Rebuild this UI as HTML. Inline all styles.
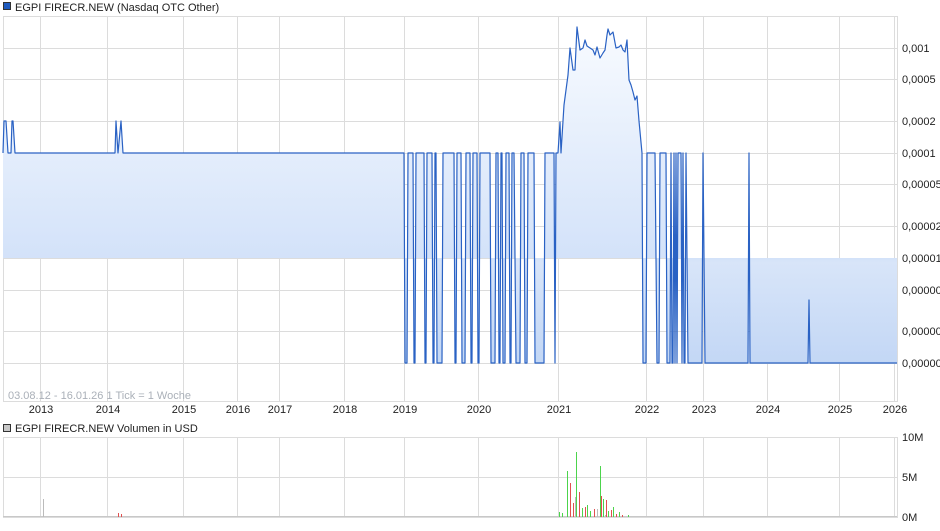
<!DOCTYPE html>
<html><head><meta charset="utf-8"><style>
html,body{margin:0;padding:0;background:#fff;}
body{width:940px;height:526px;overflow:hidden;font-family:"Liberation Sans",Arial,sans-serif;}
</style></head><body>
<svg width="940" height="526" viewBox="0 0 940 526" xmlns="http://www.w3.org/2000/svg" font-family="Liberation Sans, Arial, sans-serif">
<defs>
<linearGradient id="g" gradientUnits="userSpaceOnUse" x1="0" y1="27" x2="0" y2="363">
<stop offset="0" stop-color="#f8fbff"/>
<stop offset="0.69" stop-color="#d3e2f9"/>
<stop offset="0.7" stop-color="#d8e5f9"/>
<stop offset="1" stop-color="#c3d7f5"/>
</linearGradient>
</defs>
<!-- title -->
<rect x="3.5" y="2.5" width="7" height="7" fill="#1f5bbf" stroke="#333" stroke-width="1"/>
<text x="15" y="11" font-size="11" fill="#222">EGPI FIRECR.NEW (Nasdaq OTC Other)</text>
<!-- grid main -->
<g stroke="#dcdcdc" stroke-width="1" fill="none">
<rect x="3.5" y="16.5" width="894" height="385"/>
<path d="M3 48.5H897M3 79.5H897M3 121.5H897M3 153.5H897M3 184.5H897M3 226.5H897M3 258.5H897M3 290.5H897M3 331.5H897M3 363.5H897"/>
<path d="M40.5 16V401M107.5 16V401M183.5 16V401M237.5 16V401M279.5 16V401M344.5 16V401M404.5 16V401M478.5 16V401M558.5 16V401M646.5 16V401M703.5 16V401M767.5 16V401M839.5 16V401M894.5 16V401"/>
</g>
<!-- fill -->
<polygon fill="url(#g)" points="3,258 3,153 4,121 6,121 8,153 11,153 12,121 13,121 15,153 115,153 116,121 118,153 121,121 123,153 404,153 405,363 407,363 408,153 413,153 414,363 415,363 416,153 424,153 425,363 426,363 427,153 432,153 433,363 434,363 435,153 436,153 437,363 442,363 443,153 454,153 455,363 456,363 457,153 461,153 462,363 465,363 466,153 470,153 471,363 472,363 473,153 477,153 478,363 479,363 480,153 490,153 491,363 495,363 496,153 498,153 499,363 500,363 501,153 502,153 503,363 505,363 506,153 509,153 510,363 511,363 512,153 514,153 515,258 516,363 520,363 521,153 524,153 525,363 527,363 528,153 534,153 535,363 544,363 545,153 554,153 555,363 556,153 558,153 560,122 561,153 564,105 568,75 570,48 573,70 575,70 577,27 580,50 583,48 585,40 587,46 590,48 593,50 595,55 597,47 600,58 603,53 605,50 607,35 608,29 610,35 613,32 616,48 619,47 621,45 623,50 625,52 627,40 629,80 631,85 633,92 635,100 637,96 639,121 642,153 643,363 646,363 647,153 655,153 657,363 659,363 660,153 666,153 667,363 670,363 671,153 672,363 673,363 674,153 675,363 676,153 677,363 678,153 681,153 682,363 683,153 684,363 685,363 686,153 688,363 702,363 703,153 705,363 748,363 749,153 750,363 808,363 809,300 810,363 897,363 897,258"/>
<polyline fill="none" stroke="#2a62c4" stroke-width="1.2" stroke-linejoin="round" points="3,153 4,121 6,121 8,153 11,153 12,121 13,121 15,153 115,153 116,121 118,153 121,121 123,153 404,153 405,363 407,363 408,153 413,153 414,363 415,363 416,153 424,153 425,363 426,363 427,153 432,153 433,363 434,363 435,153 436,153 437,363 442,363 443,153 454,153 455,363 456,363 457,153 461,153 462,363 465,363 466,153 470,153 471,363 472,363 473,153 477,153 478,363 479,363 480,153 490,153 491,363 495,363 496,153 498,153 499,363 500,363 501,153 502,153 503,363 505,363 506,153 509,153 510,363 511,363 512,153 514,153 515,258 516,363 520,363 521,153 524,153 525,363 527,363 528,153 534,153 535,363 544,363 545,153 554,153 555,363 556,153 558,153 560,122 561,153 564,105 568,75 570,48 573,70 575,70 577,27 580,50 583,48 585,40 587,46 590,48 593,50 595,55 597,47 600,58 603,53 605,50 607,35 608,29 610,35 613,32 616,48 619,47 621,45 623,50 625,52 627,40 629,80 631,85 633,92 635,100 637,96 639,121 642,153 643,363 646,363 647,153 655,153 657,363 659,363 660,153 666,153 667,363 670,363 671,153 672,363 673,363 674,153 675,363 676,153 677,363 678,153 681,153 682,363 683,153 684,363 685,363 686,153 688,363 702,363 703,153 705,363 748,363 749,153 750,363 808,363 809,300 810,363 897,363"/>
<!-- y labels -->
<g font-size="11" fill="#222">
<text x="902" y="52">0,001</text>
<text x="902" y="83">0,0005</text>
<text x="902" y="125">0,0002</text>
<text x="902" y="157">0,0001</text>
<text x="902" y="188">0,00005</text>
<text x="902" y="230">0,00002</text>
<text x="902" y="262">0,00001</text>
<text x="902" y="294">0,000005</text>
<text x="902" y="335">0,000002</text>
<text x="902" y="367">0,000001</text>
</g>
<text x="8" y="399" font-size="11" fill="#aab0b8">03.08.12 - 16.01.26   1 Tick = 1 Woche</text>
<!-- x labels -->
<g font-size="11" fill="#222" text-anchor="middle">
<text x="41" y="413">2013</text><text x="108" y="413">2014</text><text x="184" y="413">2015</text><text x="238" y="413">2016</text><text x="280" y="413">2017</text><text x="345" y="413">2018</text><text x="405" y="413">2019</text><text x="479" y="413">2020</text><text x="559" y="413">2021</text><text x="647" y="413">2022</text><text x="704" y="413">2023</text><text x="768" y="413">2024</text><text x="840" y="413">2025</text><text x="895" y="413">2026</text>
</g>
<!-- volume -->
<rect x="3.5" y="424.5" width="7" height="7" fill="#c8c8c8" stroke="#333" stroke-width="1"/>
<text x="15" y="432" font-size="11" fill="#222">EGPI FIRECR.NEW Volumen in USD</text>
<g stroke="#dcdcdc" stroke-width="1" fill="none">
<rect x="3.5" y="437.5" width="894" height="80"/>
<path d="M3 477.5H897"/>
<path d="M40.5 437V517M107.5 437V517M183.5 437V517M237.5 437V517M279.5 437V517M344.5 437V517M404.5 437V517M478.5 437V517M558.5 437V517M646.5 437V517M703.5 437V517M767.5 437V517M839.5 437V517M894.5 437V517"/>
</g>
<path d="M3 516.5H897" stroke="#c8c8c8" stroke-width="1"/>
<g stroke-width="1">
<path d="M43.5 499V517" stroke="#bbb"/>
<path d="M118.5 513V517M121.5 514V517" stroke="#e05050"/>
<g stroke="#4cd44c"><path d="M559.5 512V517M562.5 513V517M567.5 471V517M576.5 452V517M582.5 508V517M587.5 505V517M590.5 511V517M600.5 466V517M603.5 499V517M608.5 511V517M613.5 507V517M619.5 512V517M628.5 515V517"/></g>
<g stroke="#e05050"><path d="M570.5 483V517M573.5 503V517M579.5 492V517M585.5 507V517M594.5 509V517M597.5 511V517M601.5 496V517M606.5 500V517M611.5 510V517M616.5 514V517M622.5 515V517"/></g>
<g stroke="#bbb"><path d="M575.5 497V517M605.5 515V517M597.5 509V517"/></g>
</g>
<g font-size="11" fill="#222">
<text x="902" y="441">10M</text>
<text x="902" y="481">5M</text>
<text x="902" y="521">0M</text>
</g>
</svg>
</body></html>
